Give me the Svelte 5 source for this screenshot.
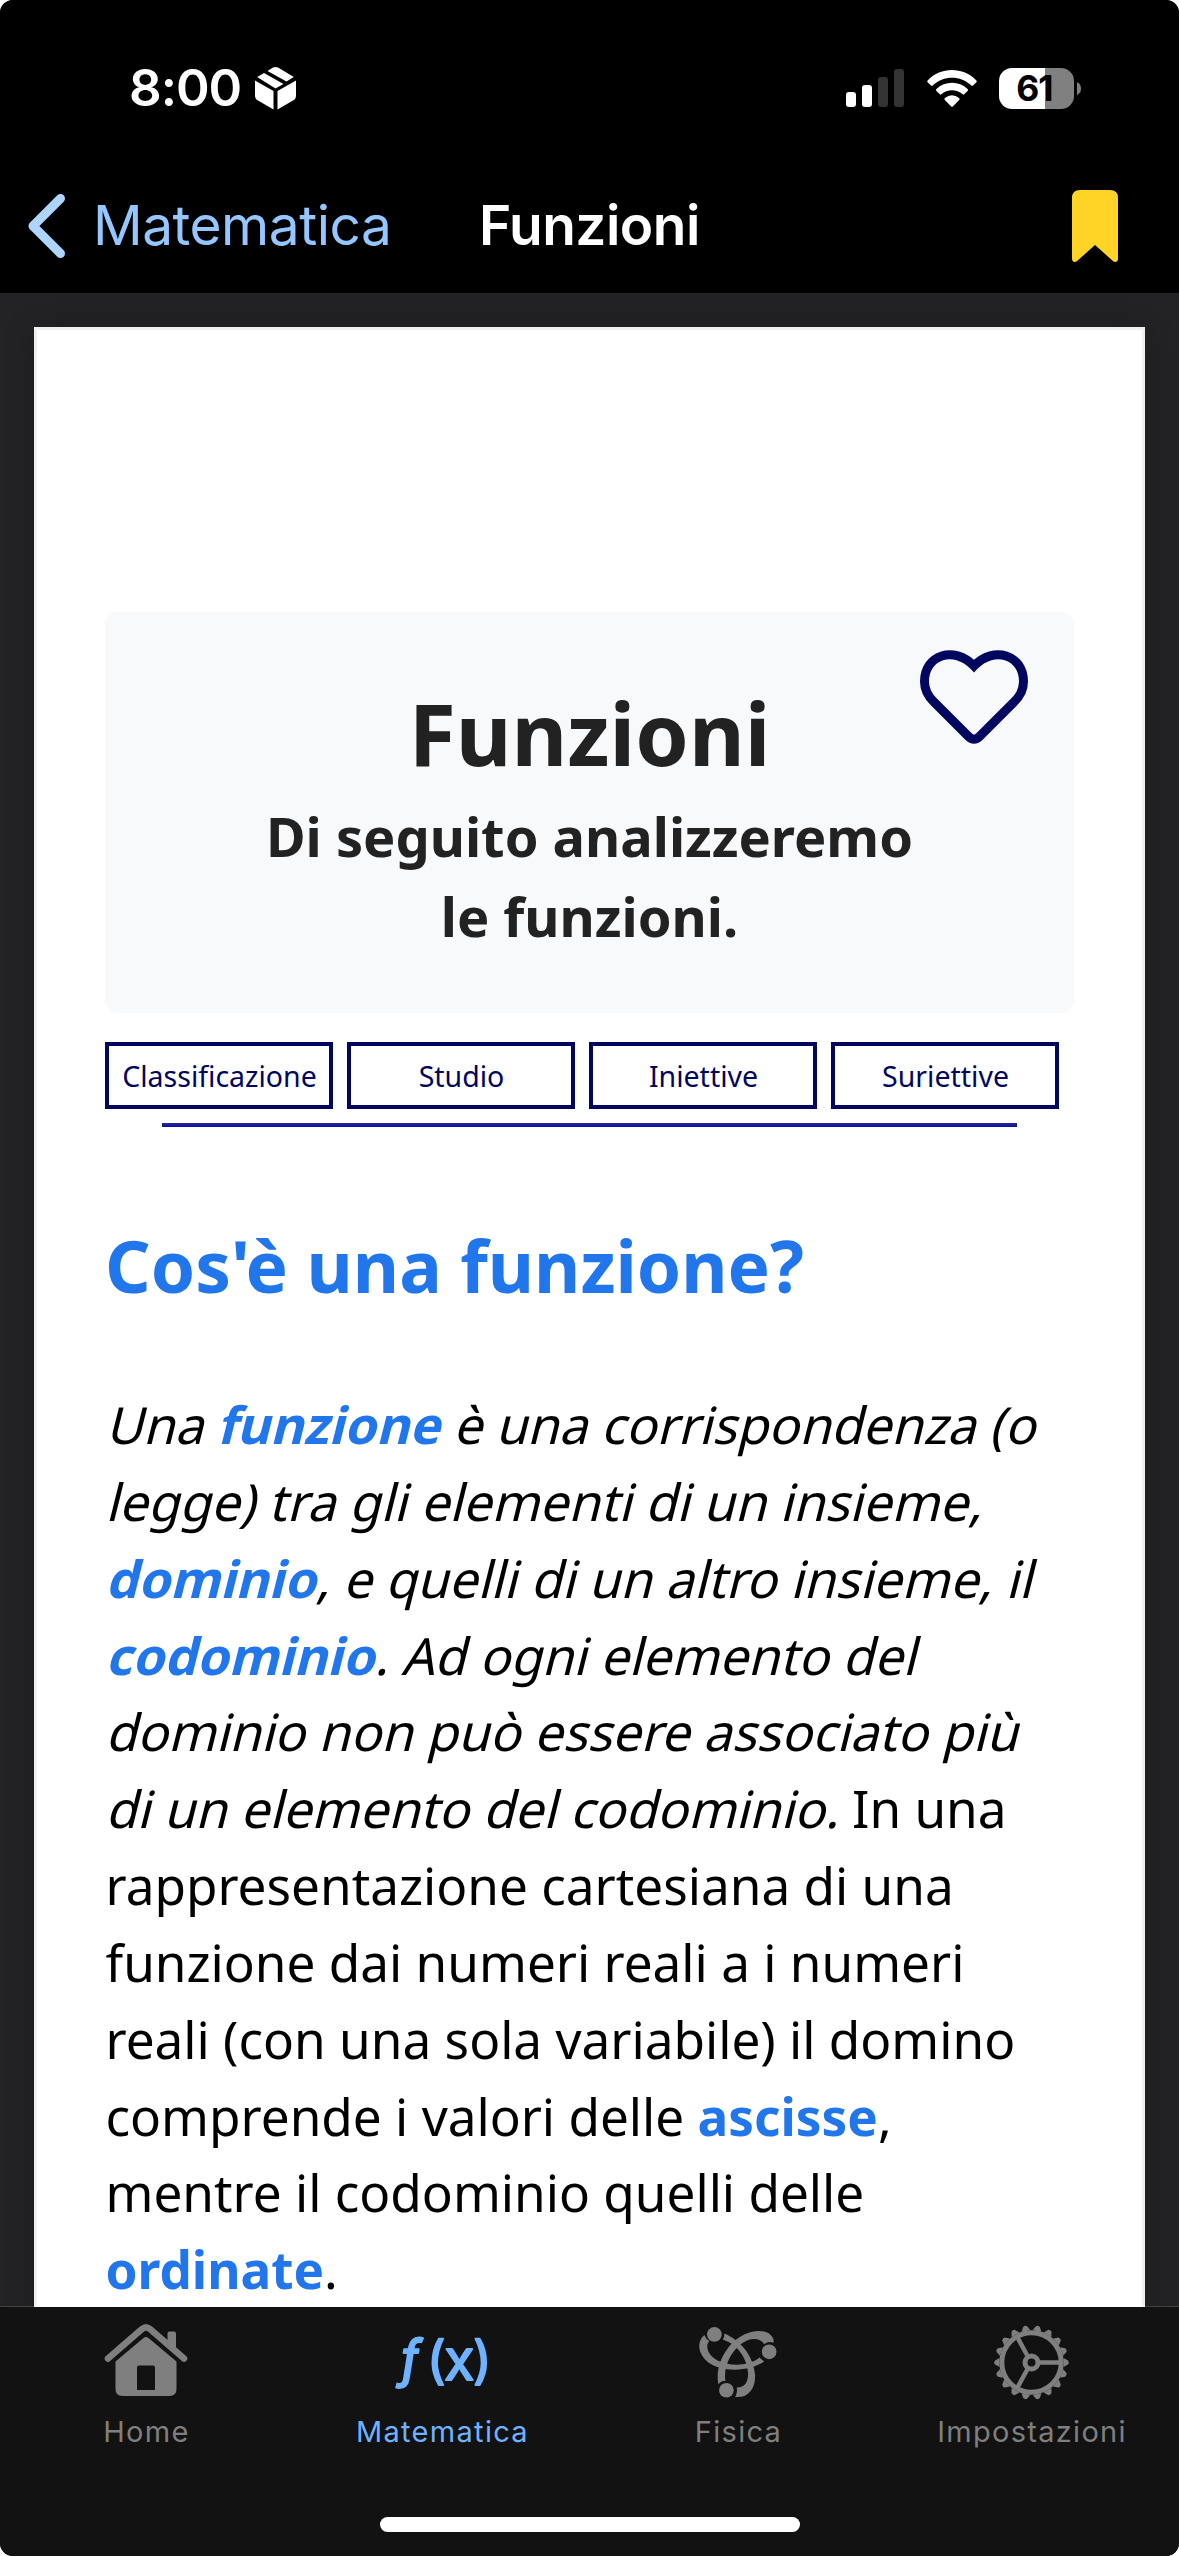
<script>
  const links = ['Classificazione', 'Studio', 'Iniettive', 'Suriettive'];
  const teeth = Array.from({ length: 18 }, (_, i) => i * 20);
</script>

<div class="screen">
  <header>
    <div class="status">
      <span class="time">8:00</span>
      <svg class="box" viewBox="0 0 41 44">
        <path d="M0 14.5 18.5 25V43.5L3 34.5Q0 33 0 29.500ZM41 14.500 22.500 25V43.500L38 34.500Q41 33 41 29.500Z" />
        <path d="M2.200 11 9 7 28.500 18 20.500 22.500ZM12.500 5 18 1.600Q20.500.3 23 1.600L38.800 11 31.500 15.500Z" />
      </svg>
      <svg class="signal" viewBox="0 0 58 38">
        <rect x="0" y="23" width="10" height="15" rx="3" />
        <rect x="16" y="16" width="10" height="22" rx="3" />
        <rect class="off" x="32" y="8" width="10" height="30" rx="3" />
        <rect class="off" x="48" y="0" width="10" height="38" rx="3" />
      </svg>
      <svg class="wifi" viewBox="0 0 50 37">
        <path d="M.6 10.500C14-3.400 36-3.400 49.400 10.500Q50.200 11.400 49.400 12.300L46 15.600Q45.200 16.200 44.400 15.500C33.500 5 16.500 5 5.600 15.500Q4.800 16.200 4 15.600L.6 12.300Q-.2 11.400.6 10.500Z" />
        <path d="M9.200 19.200C18 10.700 32 10.700 40.800 19.200Q41.500 20 40.800 20.800L37.200 24.300Q36.500 25 35.700 24.300C29.500 18.800 20.500 18.800 14.300 24.300Q13.500 25 12.800 24.300L9.200 20.800Q8.500 20 9.200 19.200Z" />
        <path d="M17.900 28Q25 22.600 32.100 28 33 29 32.200 29.900L25.800 36.400Q25 37 24.200 36.400L17.800 29.900Q17 29 17.900 28Z" />
      </svg>
      <div class="battery"><span>61</span></div>
      <svg class="nub" viewBox="0 0 4 13"><path d="M0 0Q4 2 4 6.500T0 13Z" /></svg>
    </div>
    <nav>
      <svg class="chevron" viewBox="0 0 37 64"><path d="M32.500 4.500 5 32 32.500 59.500" /></svg>
      <span class="back">Matematica</span>
      <span class="title">Funzioni</span>
      <svg class="bookmark" viewBox="0 0 46 72">
        <path d="M8 0H38Q46 0 46 8V69Q45.500 73 41.500 71.500L23 55 4.500 71.500Q.5 73 0 69V8Q0 0 8 0Z" />
      </svg>
    </nav>
  </header>

  <main>
    <article>
      <section class="hero">
        <h1>Funzioni</h1>
        <p>Di seguito analizzeremo<br />le funzioni.</p>
        <svg class="heart" viewBox="0 0 108 94">
          <path d="M54 16C34-5 4.500 5 4.500 31.500Q4.500 43 14 52L48.500 86.500Q54 92 59.500 86.500L94 52Q103.500 43 103.500 31.500C103.500 5 74-5 54 16Z" />
        </svg>
      </section>
      <div class="links">
        {#each links as link}<span>{link}</span>{/each}
      </div>
      <hr />
      <h2>Cos'è una funzione?</h2>
      <p class="body">
        <i>Una <b>funzione</b> è una corrispondenza (o</i><br />
        <i>legge) tra gli elementi di un insieme,</i><br />
        <i><b>dominio</b>, e quelli di un altro insieme, il</i><br />
        <i><b>codominio</b>. Ad ogni elemento del</i><br />
        <i>dominio non può essere associato più</i><br />
        <i>di un elemento del codominio.</i> In una<br />
        rappresentazione cartesiana di una<br />
        funzione dai numeri reali a i numeri<br />
        reali (con una sola variabile) il domino<br />
        comprende i valori delle <b>ascisse</b>,<br />
        mentre il codominio quelli delle<br />
        <b>ordinate</b>.
      </p>
    </article>
  </main>

  <footer>
    <div class="tabs">
      <div class="tab">
        <svg class="home" viewBox="0 0 82 72">
          <path class="roof" d="M3 34.500 37 5Q41 1.700 45 5L79 34.500" />
          <path d="M62.500 22V9.500Q62.500 7.500 64.500 7.500H69Q71 7.500 71 9.500V29Z" />
          <path fill-rule="evenodd" d="M10.500 37.500 38.500 14Q41 12 43.500 14L71.500 37.500V65Q71.500 72 64.500 72H17.500Q10.500 72 10.500 65ZM32 66H50V43.500Q50 41.500 48 41.500H34Q32 41.500 32 43.500Z" />
        </svg>
        <span>Home</span>
      </div>
      <div class="tab active">
        <svg class="fx" viewBox="0 0 95 72">
          <text class="f" x="4.500" y="53">ƒ</text>
          <text class="par" x="32" y="54">(</text>
          <text class="x" x="49" y="56">x</text>
          <text class="par" x="78" y="54">)</text>
        </svg>
        <span>Matematica</span>
      </div>
      <div class="tab">
        <svg class="atom" viewBox="27 51 232 212">
          <path d="M43 75C20 95 22 130 55 157 90 184 175 188 222 154L208 142C180 165 130 170 92 155 55 140 43 110 58 93Q48 88 43 75Z" />
          <path d="M85 222C76 175 96 130 128 97 165 60 225 50 246 80Q252 88 250 98 235 92 222 102C210 82 178 80 148 105 120 130 100 170 106 213 97 210 92 215 85 222Z" />
          <path d="M103 70C150 90 190 135 195 195 196 240 170 265 135 260Q143 247 140 232C165 232 174 215 174 190 172 150 148 105 98 88Q104 80 103 70Z" />
          <circle cx="73" cy="73" r="22" />
          <circle cx="237" cy="125" r="22" />
          <circle cx="109" cy="240" r="22" />
        </svg>
        <span>Fisica</span>
      </div>
      <div class="tab">
        <svg class="gear" viewBox="-37.500 -37.500 75 75">
          {#each teeth as t}
            <path d="M-4.500-32-2-36.500Q0-38 2-36.500L4.500-32Z" transform="rotate({t + 10})" />
          {/each}
          <circle class="line" r="29.700" />
          <circle class="line" r="6.500" />
          <path class="spoke" d="M8 0H28M-4.200-7-14-25M-4.200 7-14 25" />
        </svg>
        <span>Impostazioni</span>
      </div>
    </div>
    <div class="indicator"></div>
  </footer>
</div>

<style>
  :global(body) { background: #fff; }
  .screen {
    width: 1179px;
    height: 2556px;
    display: flex;
    flex-direction: column;
    overflow: hidden;
    border-radius: 13px;
    background: #121212;
    font-family: Inter, sans-serif;
    color: #fff;
  }
  svg { display: block; flex: none; fill: currentColor; overflow: visible; }
  header { height: 293px; background: #000; flex: none; }
  .status {
    height: 176px;
    padding-left: 129px;
    display: flex;
    align-items: center;
    box-sizing: border-box;
  }
  .time { font-size: 51px; font-weight: 600; line-height: 60px; letter-spacing: -1px; width: 126px; white-space: nowrap; }
  .box { width: 41px; height: 44px; }
  .signal { width: 58px; height: 38px; margin-left: 550px; }
  .off { fill: #333; }
  .wifi { width: 50px; height: 37px; margin-left: 22.500px; }
  .battery {
    width: 75px;
    height: 41px;
    margin-left: 22.500px;
    padding-right: 4px;
    box-sizing: border-box;
    border-radius: 13px;
    background: linear-gradient(90deg, #fff 46px, #808080 46px);
    color: #000;
    font-size: 35.500px;
    font-weight: 700;
    line-height: 41px;
    letter-spacing: -1px;
    text-align: center;
  }
  .nub { width: 4px; height: 13px; margin-left: 3px; fill: #808080; }
  nav { height: 99px; display: flex; align-items: center; padding-left: 28px; color: #95c6ff; }
  .chevron { width: 37px; height: 64px; fill: none; stroke: #aed5ff; stroke-width: 9; stroke-linecap: round; stroke-linejoin: round; }
  .back, .title { font-size: 55px; line-height: 66px; white-space: nowrap; position: relative; top: -0.500px; }
  .back { margin-left: 28px; width: 386px; letter-spacing: -0.500px; }
  .title { color: #fff; font-weight: 600; width: 593px; letter-spacing: -0.500px; }
  .bookmark { width: 46px; height: 72px; margin-top: 1px; fill: #ffd426; }

  main { height: 2014px; flex: none; overflow: hidden; padding: 34px 34px 0; box-sizing: border-box; background: #232325; }
  article {
    height: 2100px;
    border: 3px solid #f0f0f1;
    box-sizing: border-box;
    padding: 282px 68px 0;
    background: #fff;
    box-shadow: 0 0 30px rgba(0, 0, 0, 0.2);
    font-family: "Noto Sans", sans-serif;
    color: #000;
  }
  .hero {
    position: relative;
    height: 401px;
    border-radius: 13px;
    background: #f8f9fb;
    color: #222;
    text-align: center;
    padding-top: 61px;
    box-sizing: border-box;
    width: 969px;
  }
  h1, h2, p { margin: 0; }
  h1 { font-size: 85.800px; line-height: 120px; font-weight: 700; }
  .hero p { font-size: 54.200px; line-height: 80px; font-weight: 700; margin-top: 3px; }
  .heart { position: absolute; right: 46px; top: 38px; width: 108px; height: 94px; fill: none; stroke: #01065e; stroke-width: 9; }
  .links { display: flex; gap: 14px; margin-top: 29px; }
  .links span {
    width: 228px;
    height: 67px;
    padding-left: 1px;
    border: 4px solid #01065e;
    box-sizing: border-box;
    color: #01065e;
    font-size: 28.500px;
    line-height: 60px;
    text-align: center;
    white-space: nowrap;
  }
  hr { width: 855px; height: 4px; margin: 14px 0 0 57px; border: 0; background: linear-gradient(#2a2a8a, #0a0ab0); }
  h2 { margin-top: 90px; font-size: 71.200px; line-height: 98px; font-weight: 700; color: #2076ea; white-space: nowrap; }
  .body { margin-top: 71px; font-size: 51.280px; line-height: 76.850px; white-space: nowrap; padding-left: 0.500px; }
  .body b { color: #2076ea; font-weight: 700; }
  /* Slant the upright face about its baseline, keeping upright advance widths. */
  i {
    display: inline-block;
    font-style: normal;
    line-height: 76.850px;
    vertical-align: top;
    transform: skewX(-14deg);
    transform-origin: 0 55px;
  }

  footer {
    flex: 1;
    position: relative;
    display: flex;
    flex-direction: column;
    align-items: center;
    background: #121212;
    box-shadow: 0 -1px rgba(255, 255, 255, 0.15);
  }
  .tabs { width: 1179px; height: 210px; display: grid; grid-template-columns: 292px 300px 292px 295px; }
  .tab { display: flex; flex-direction: column; align-items: center; color: #7f7f7f; }
  .tab > svg { height: 72px; margin-top: 17px; }
  .tab > span { font-size: 29px; line-height: 36px; margin: 18px 0 0 1px; letter-spacing: 1.300px; font-weight: 400; }
  .active { color: #6fb2ff; }
  .home { width: 82px; }
  .roof { fill: none; stroke: currentColor; stroke-width: 6.500; stroke-linecap: round; }
  .tab > .atom { width: 77.500px; height: 71px; margin-top: 20px; }
  .tab > .atom + span { margin-top: 16px; }
  .tab > .gear { width: 75px; height: 75px; margin-top: 18px; }
  .tab > .gear + span { margin-top: 14px; }
  .line { fill: none; stroke: currentColor; stroke-width: 5; }
  .spoke { stroke: currentColor; stroke-width: 4.500; }
  .fx { width: 95px; }
  .fx text { stroke: currentColor; stroke-width: 1.800; stroke-linejoin: round; }
  .f { font-size: 52px; font-style: italic; }
  .par { font-size: 51px; }
  .x { font-size: 56px; }
  .indicator { width: 420px; height: 15px; border-radius: 8px; background: #fff; }
</style>
